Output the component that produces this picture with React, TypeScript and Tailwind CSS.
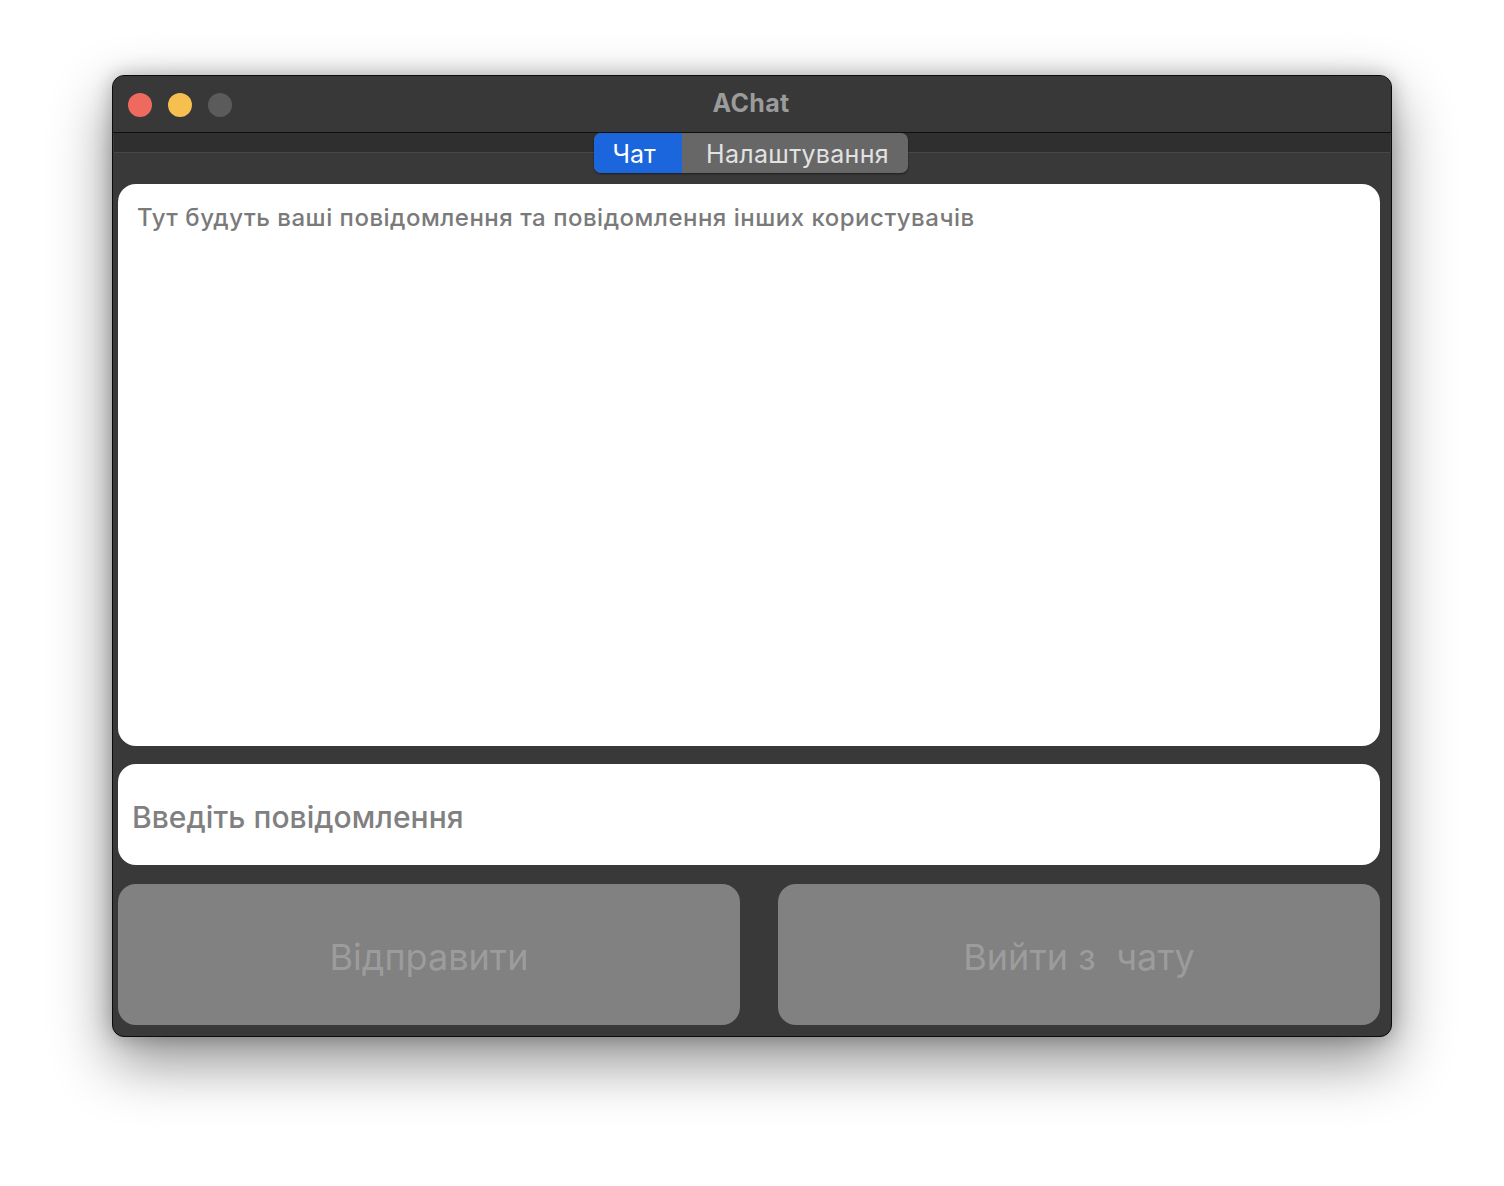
import React from "react";

export default function App() {
  return (
    <div className="w-[1504px] h-[1186px] bg-white overflow-hidden" style={{ fontFamily: "Inter, 'Noto Sans', sans-serif" }}>
      <div className="ml-[112px] mt-[75px] w-[1280px] h-[962px] rounded-[12px] border border-[#0c0c0c] bg-[#393939] shadow-[0_24px_60px_rgba(0,0,0,0.45),0_0_20px_rgba(0,0,0,0.25)] flex flex-col overflow-hidden">
        {/* title bar */}
        <div className="relative h-[57px] bg-[#383838] border-b border-[#0f0f0f] flex items-center shrink-0">
          <div className="flex items-center gap-[16px] pl-[15px] pt-[1px]">
            <div className="w-[24px] h-[24px] rounded-full bg-[#ee6a5f]" />
            <div className="w-[24px] h-[24px] rounded-full bg-[#f5c04f]" />
            <div className="w-[24px] h-[24px] rounded-full bg-[#5b5b5b]" />
          </div>
          <div className="absolute inset-0 flex items-center justify-center pr-[2px] pb-[1px] text-[25px] font-bold text-[#9b9b9b] tracking-[0.3px]">
            AChat
          </div>
        </div>
        {/* tab strip */}
        <div className="relative h-[20px] bg-[#2f2f2f] shrink-0 border-b border-[#484848] mx-[1px]">
          <div className="absolute left-[480px] top-0 h-[40px] flex rounded-[7px] overflow-hidden bg-[#676767] shadow-[0_1px_2px_rgba(0,0,0,0.5)] z-10">
            <div className="w-[88px] h-full bg-[#1b66dc] flex items-center justify-center pr-[8px] pt-[3px] text-[25px] text-white">Чат</div>
            <div className="w-[226px] h-full flex items-center justify-center pl-[5px] pt-[3px] text-[25px] text-[#e2e2e2] tracking-[0.3px]">Налаштування</div>
          </div>
        </div>
        {/* content */}
        <div className="flex-1 flex flex-col pl-[5px] pr-[11px] pt-[31px] pb-[11px] gap-[18px]">
          <div className="h-[562px] bg-white rounded-[18px] px-[19px] pt-[20px] text-[24px] font-medium text-[#7a7a7a] leading-[28px] tracking-[0.5px]">
            Тут будуть ваші повідомлення та повідомлення інших користувачів
          </div>
          <div className="h-[101px] bg-white rounded-[18px] flex items-center px-[14px] pt-[6px] text-[30px] font-medium text-[#808080] tracking-[0.05px]">
            Введіть повідомлення
          </div>
          <div className="h-[141px] flex gap-[38px] mt-[1px]">
            <div className="w-[622px] bg-[#818181] rounded-[18px] flex items-center justify-center pt-[5px] text-[36px] text-[#9c9c9c]">Відправити</div>
            <div className="flex-1 bg-[#818181] rounded-[18px] flex items-center justify-center pt-[5px] text-[36px] text-[#9c9c9c] whitespace-pre">Вийти з  чату</div>
          </div>
        </div>
      </div>
    </div>
  );
}
